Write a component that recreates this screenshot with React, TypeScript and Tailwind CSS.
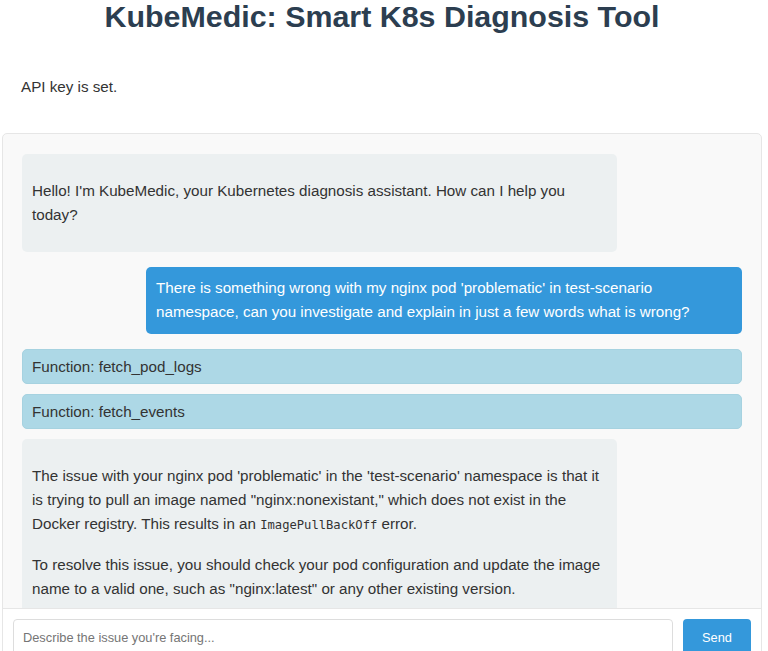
import React from "react";

export default function App() {
  return (
    <div className="w-[764px] font-['Liberation_Sans',Arial,sans-serif] text-[15.2px] text-[#333]">
      <h1 className="m-0 text-center text-[30.4px] font-bold leading-[32px] text-[#2c3e50]">
        KubeMedic: Smart K8s Diagnosis Tool
      </h1>
      <p className="mt-[43px] px-[21px] leading-[24px]">API key is set.</p>
      <div className="mx-[2px] mt-[34px] overflow-hidden rounded-[5px] border border-[#e6e6e6] bg-[#f9f9f9]">
        <div className="flex h-[474px] flex-col overflow-hidden px-[19px] pt-[20px] leading-[24.32px]">
          <div className="mb-[15px] w-[595px] shrink-0 rounded-[5px] bg-[#ecf0f1] px-[10px] py-[9.5px]">
            <p className="my-[15px]">
              Hello! I'm KubeMedic, your Kubernetes diagnosis assistant. How can I help you today?
            </p>
          </div>
          <div className="mb-[15px] ml-auto w-[596px] shrink-0 rounded-[5px] bg-[#3498db] px-[10px] py-[9.5px] text-white">
            There is something wrong with my nginx pod 'problematic' in test-scenario namespace, can you investigate and explain in just a few words what is wrong?
          </div>
          <div className="mb-[10px] flex h-[35px] shrink-0 items-center rounded-[5px] border border-[#a6d2e0] bg-[#add8e6] px-[9px]">
            Function: fetch_pod_logs
          </div>
          <div className="mb-[10px] flex h-[35px] shrink-0 items-center rounded-[5px] border border-[#a6d2e0] bg-[#add8e6] px-[9px]">
            Function: fetch_events
          </div>
          <div className="w-[595px] shrink-0 rounded-[5px] bg-[#ecf0f1] px-[10px] py-[9.5px]">
            <p className="my-[15px]">
              The issue with your nginx pod 'problematic' in the 'test-scenario' namespace is that it is trying to pull an image named "nginx:nonexistant," which does not exist in the Docker registry. This results in an{" "}
              <code className="font-['DejaVu_Sans_Mono',monospace] text-[12.16px]">ImagePullBackOff</code> error.
            </p>
            <p className="my-[15px]">
              To resolve this issue, you should check your pod configuration and update the image name to a valid one, such as "nginx:latest" or any other existing version.
            </p>
          </div>
        </div>
        <div className="flex gap-[10px] border-t border-[#e6e6e6] bg-white p-[10px]">
          <input
            className="min-w-0 flex-1 rounded-[4px] border border-[#dddddd] px-[9px] py-[10px] text-[12.8px] leading-[15px] text-[#333] placeholder:text-[#757575] outline-none"
            placeholder="Describe the issue you're facing..."
          />
          <button className="w-[68px] rounded-[4px] bg-[#3498db] text-[12.8px] text-white">
            Send
          </button>
        </div>
      </div>
    </div>
  );
}
